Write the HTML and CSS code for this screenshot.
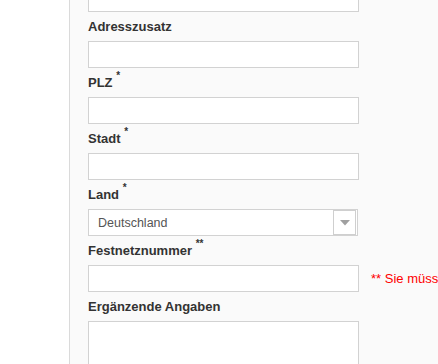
FILE: index.html
```html
<!DOCTYPE html>
<html lang="de">
  <head>
    <meta charset="UTF-8" />
    <meta name="viewport" content="width=device-width, initial-scale=1.0" />
    <title>Adresse</title>
    <link rel="stylesheet" href="styles.css">
  </head>
  <body>
    <div class="page">
      <div class="sidebar"></div>
      <div class="main">
        <form class="address-form">
          <input type="text" class="field first" />

          <label for="zusatz">Adresszusatz</label>
          <input type="text" id="zusatz" class="field" />

          <label for="plz">PLZ <sup class="req">*</sup></label>
          <input type="text" id="plz" class="field" />

          <label for="stadt">Stadt <sup class="req">*</sup></label>
          <input type="text" id="stadt" class="field" />

          <label>Land <sup class="req">*</sup></label>
          <div class="select">
            <span class="select-value">Deutschland</span>
            <span class="select-btn">
              <svg width="10" height="6" viewBox="0 0 10 6"><path d="M0 0H10L5 5.5Z" fill="#a0a0a0" /></svg>
            </span>
          </div>

          <label for="festnetz">Festnetznummer <sup class="req">**</sup></label>
          <div class="field-row">
            <input type="text" id="festnetz" class="field" />
            <span class="hint">** Sie müssen mindestens eine Telefonnummer angeben</span>
          </div>

          <label for="angaben">Ergänzende Angaben</label>
          <textarea id="angaben" class="field area"></textarea>
        </form>
      </div>
    </div>
  </body>
</html>
```

FILE: styles.css
```css
body {
  font-family: "Liberation Sans", Arial, sans-serif;
  margin: 0;
  overflow: hidden;
  background-color: #fafafa;
}
.page {
  display: flex;
  height: 364px;
}
.sidebar {
  width: 69px;
  flex-shrink: 0;
  background: #fff;
  border-right: 1px solid #dadada;
}
.main {
  flex: 1;
  min-width: 0;
  padding-left: 18px;
  background: #fafafa;
}
.address-form {
  display: flex;
  flex-direction: column;
  margin-top: -15px;
}
label {
  display: block;
  margin: 6px 0;
  font-size: 13px;
  font-weight: bold;
  line-height: 17px;
  color: #333;
  white-space: nowrap;
}
.req {
  font-size: 10px;
  line-height: 0;
  vertical-align: 8px;
}
.field {
  box-sizing: border-box;
  width: 271px;
  height: 27px;
  margin: 0;
  padding: 4px 9px;
  border: 1px solid #d2d2d2;
  border-radius: 0;
  background: #fff;
  font-family: inherit;
  font-size: 13px;
}
.area {
  height: 70px;
  resize: none;
}
.select {
  box-sizing: border-box;
  display: flex;
  align-items: center;
  width: 270px;
  height: 27px;
  padding: 0 1px 0 9px;
  border: 1px solid #d2d2d2;
  background: #fff;
}
.select-value {
  flex: 1;
  font-size: 12.5px;
  color: #555;
}
.select-btn {
  box-sizing: border-box;
  display: flex;
  align-items: center;
  justify-content: center;
  width: 23px;
  height: 25px;
  border: 1px solid #cfcfcf;
  background: #fff;
}
.field-row {
  display: flex;
  align-items: center;
  gap: 12px;
  white-space: nowrap;
}
.field-row .field {
  flex-shrink: 0;
}
.hint {
  font-size: 13px;
  color: #f00;
}
```
